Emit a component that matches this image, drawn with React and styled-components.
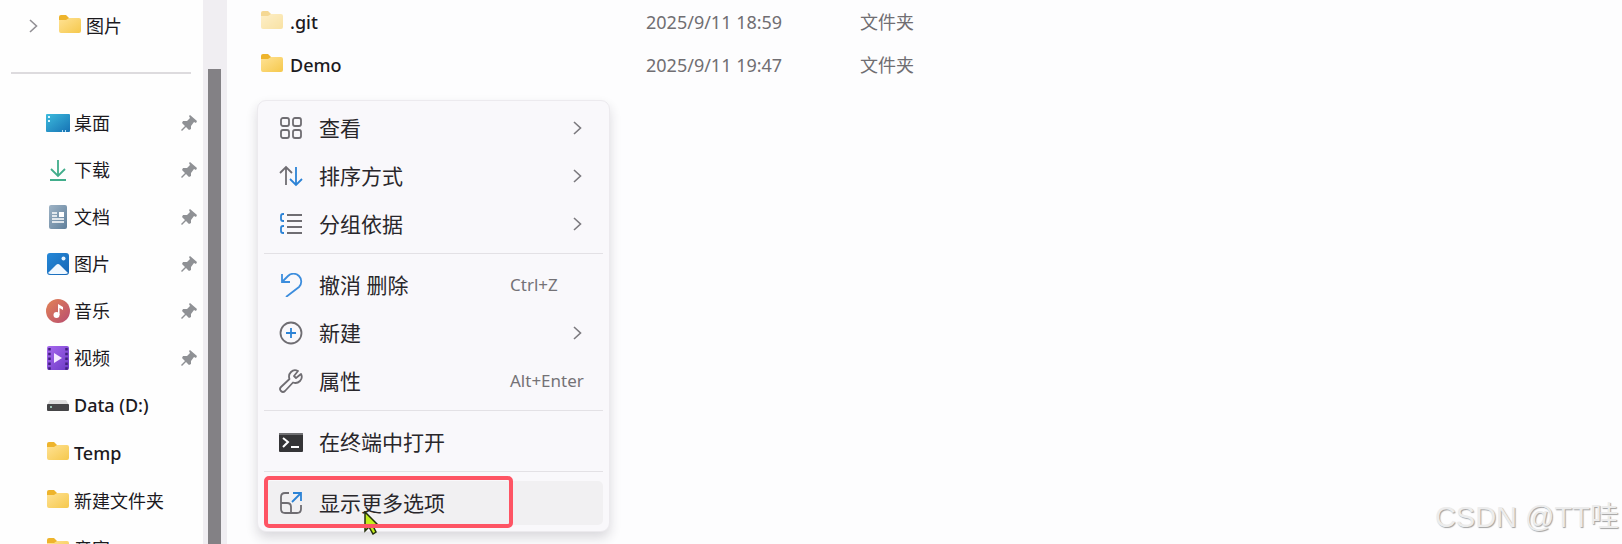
import React from "react";
import styled, { createGlobalStyle } from "styled-components";

const GlobalStyle = createGlobalStyle`
  * {
    box-sizing: border-box;
  }
  body {
    margin: 0;
    overflow: hidden;
    color: #1c1a1e;
    background-color: #fefefe;
    font-family: "Noto Sans", "Noto Sans CJK SC", sans-serif;
    font-size: 18px;
    line-height: 24px;
  }
`;

const Window = styled.div`
  display: flex;
  height: 100vh;
  overflow: hidden;
`;

const Sidebar = styled.nav`
  flex: 0 0 203px;
  overflow: hidden;
`;

const TreeItem = styled.a`
  display: flex;
  align-items: center;
  height: 52px;
  padding-left: 29px;
  color: inherit;
  text-decoration: none;

  svg + svg {
    margin: 0 4px 0 20px;
  }
`;

const Divider = styled.hr`
  height: 2px;
  margin: 20px 12px 25px 11px;
  border: 0;
  background-color: #dddbde;
`;

const PlaceList = styled.ul`
  margin: 0;
  padding: 0;
  list-style: none;
`;

const Place = styled.a`
  display: flex;
  align-items: center;
  gap: 4px;
  height: ${props => (props.$pinned ? "47px" : "48px")};
  padding: 0 6px 0 46px;
  color: inherit;
  text-decoration: none;
  white-space: nowrap;
`;

const PlaceName = styled.span`
  flex: 1;
  font-weight: ${props => (props.$latin ? 500 : 400)};
`;

const Scrollbar = styled.div`
  flex: 0 0 24px;
  padding: 69px 6px 0 5px;
  background-color: #f0eef2;
`;

const Thumb = styled.div`
  height: 100%;
  background-color: #838185;
`;

const Main = styled.main`
  position: relative;
  flex: 1;
  min-width: 0;
  background-color: #fdfdfe;
`;

const FileTable = styled.table`
  width: 100%;
  table-layout: fixed;
  border-collapse: collapse;
`;

const FileCell = styled.td`
  width: ${props => props.$width || "auto"};
  height: 43px;
  padding: 0;
  color: #706e72;
`;

const FileName = styled.a`
  display: flex;
  align-items: center;
  gap: 6px;
  padding-left: 33px;
  color: #1c1a1e;
  font-weight: 500;
  text-decoration: none;
`;

const Menu = styled.div`
  position: absolute;
  top: 100px;
  left: 30px;
  display: flex;
  flex-direction: column;
  width: 353px;
  padding: 3px 6px 4px;
  border: 1px solid #eceaee;
  border-radius: 9px;
  background-color: #f9f8fb;
  box-shadow: 0 6px 12px rgba(40, 30, 50, 0.16);
`;

const MenuItem = styled.button`
  display: flex;
  align-items: center;
  gap: 16px;
  width: 100%;
  height: 44px;
  margin: 2px 0;
  padding: 0 16px 0 15px;
  border: 0;
  border-radius: 5px;
  background-color: ${props => (props.$active ? "#f1f0f2" : "transparent")};
  color: #29272b;
  font-family: inherit;
  font-size: 21px;
  line-height: 28px;
  text-align: left;
`;

const MenuLabel = styled.span`
  flex: 1;
`;

const Shortcut = styled.span`
  width: 77px;
  color: #747276;
  font-size: 17px;
`;

const Arrow = styled.span`
  display: flex;
  margin-right: 5px;
`;

const Separator = styled.hr`
  width: 100%;
  height: 1px;
  margin: 5px 0 7px;
  border: 0;
  background-color: #e3e1e5;
`;

const Marked = styled.div`
  position: relative;
`;

const Frame = styled.div`
  position: absolute;
  top: -3px;
  left: 0;
  width: 249px;
  height: 52px;
  border: 4px solid #fe5464;
  border-radius: 5px;
`;

const Pointer = styled.svg`
  position: absolute;
  top: 32px;
  left: 100px;
`;

const Watermark = styled.div`
  position: absolute;
  right: 3px;
  bottom: 9px;
  color: #ececec;
  font-family: "Liberation Sans", "Noto Sans CJK SC", sans-serif;
  font-size: 29px;
  line-height: 36px;
  text-shadow: 1px 1px 1px #a2a2a2;
`;

const Folder = ({ pale }) => (
  <svg width="24" height="24" viewBox="0 0 24 24" opacity={pale ? 0.5 : 1}>
    <defs>
      <linearGradient id="folder" x1="0" y1="0" x2="1" y2="1">
        <stop offset="0" stopColor="#ffe294" />
        <stop offset="1" stopColor="#f5c84c" />
      </linearGradient>
    </defs>
    <path d="M1 3q0-2 2-2h5l3 3v5H1z" fill="#eeb42c" />
    <path d="M1 6h7l3-2h10q2 0 2 2v11q0 2-2 2H3q-2 0-2-2z" fill="url(#folder)" />
  </svg>
);

const Desktop = () => (
  <svg width="24" height="24" viewBox="0 0 24 24">
    <defs>
      <linearGradient id="desktop" x1="0" y1="0" x2="1" y2="1">
        <stop offset="0" stopColor="#3dbbdd" />
        <stop offset="1" stopColor="#1672b4" />
      </linearGradient>
    </defs>
    <rect y="3" width="24" height="18" rx="1" fill="url(#desktop)" />
    <path d="M2 5h2v2H2zM2 9h2v2H2z" fill="#d8f6ff" />
    <path d="M16 19h1v2h-1zM19 19h1v2h-1z" fill="#b4ddf4" />
  </svg>
);

const Download = () => (
  <svg width="24" height="24" viewBox="0 0 24 24" fill="none" stroke="#41ad8b" strokeWidth="1.8">
    <path d="M12 2v16M5 11l7 7 7-7M4 22h16" />
  </svg>
);

const Documents = () => (
  <svg width="24" height="24" viewBox="0 0 24 24">
    <defs>
      <linearGradient id="documents" x1="0" y1="0" x2="1" y2="1">
        <stop offset="0" stopColor="#9eb3c5" />
        <stop offset="1" stopColor="#5f7f9b" />
      </linearGradient>
    </defs>
    <rect x="3" width="18" height="24" rx="2" fill="url(#documents)" />
    <path d="M6 8h5M6 11h5M6 14h12M6 17h12" stroke="#fff" strokeWidth="1.5" />
    <path d="M13 7h5v5h-5z" fill="#fff" />
  </svg>
);

const Pictures = () => (
  <svg width="24" height="24" viewBox="0 0 24 24">
    <defs>
      <linearGradient id="pictures" x1="0" y1="0" x2="1" y2="1">
        <stop offset="0" stopColor="#2588d8" />
        <stop offset="1" stopColor="#1766b4" />
      </linearGradient>
    </defs>
    <rect x="1" y="1" width="22" height="22" rx="3" fill="url(#pictures)" />
    <path d="M2 21l8-8q2-2 4 0l8 8q-1 1-3 1H5q-2 0-3-1z" fill="#f0f8ff" />
    <circle cx="17.5" cy="6.5" r="2" fill="#e4f3ff" />
  </svg>
);

const Music = () => (
  <svg width="24" height="24" viewBox="0 0 24 24">
    <defs>
      <linearGradient id="music" x1="0" y1="0" x2="1" y2="1">
        <stop offset="0" stopColor="#e38456" />
        <stop offset="1" stopColor="#b84c70" />
      </linearGradient>
    </defs>
    <circle cx="12" cy="12" r="12" fill="url(#music)" />
    <circle cx="10.5" cy="16" r="3" fill="#fff" />
    <path d="M12 16V5l5 3v3l-3.5-2v7z" fill="#fff" />
  </svg>
);

const Videos = () => (
  <svg width="24" height="24" viewBox="0 0 24 24">
    <defs>
      <linearGradient id="videos" x1="0" y1="0" x2="1" y2="1">
        <stop offset="0" stopColor="#a768ee" />
        <stop offset="1" stopColor="#6c3ac6" />
      </linearGradient>
    </defs>
    <rect x="1" width="22" height="24" rx="2" fill="url(#videos)" />
    <path d="M3.5 2v22M20.5 2v22" stroke="#40207e" strokeWidth="2.5" strokeDasharray="2.5 2.3" />
    <path d="M8 7l8 5-8 5z" fill="#f4e8ff" />
  </svg>
);

const Drive = () => (
  <svg width="24" height="24" viewBox="0 0 24 24">
    <path d="M4 7h16l3 5H1z" fill="#dedede" />
    <rect x="1" y="11" width="22" height="7" rx="1" fill="#454547" />
    <path d="M4 14h2" stroke="#b0e4d0" strokeWidth="1.5" />
  </svg>
);

const Pin = () => (
  <svg width="16" height="18" viewBox="0 0 16 18">
    <path d="M9 1l7 6-1 2-2-1-3 4v3l-2 1-3-3-4 4-1-1 4-4-3-3 1-2h4l3-3-1-2z" fill="#8f9195" />
  </svg>
);

const Chevron = ({ color = "#7b797e" }) => (
  <svg width="9" height="16" viewBox="0 0 9 16" fill="none" stroke={color} strokeWidth="1.6">
    <path d="M1 2l6.5 6L1 14" />
  </svg>
);

const MenuIcon = ({ children }) => (
  <svg width="24" height="24" viewBox="0 0 24 24" fill="none" stroke="#6f6d72" strokeWidth="1.8">
    {children}
  </svg>
);

const ViewIcon = () => (
  <MenuIcon>
    <rect x="2" y="2" width="8" height="8" rx="2" />
    <rect x="14" y="2" width="8" height="8" rx="2" />
    <rect x="2" y="14" width="8" height="8" rx="2" />
    <rect x="14" y="14" width="8" height="8" rx="2" />
  </MenuIcon>
);

const SortIcon = () => (
  <MenuIcon>
    <path d="M7 21V3M1 9l6-6 6 6" />
    <path d="M17 3v18M11 15l6 6 6-6" stroke="#2c83d6" />
  </MenuIcon>
);

const GroupIcon = () => (
  <MenuIcon>
    <path d="M8 3h15M8 9h15M8 15h15M8 21h15" />
    <path d="M5 2H4Q2 2 2 4v3q0 2 2 2h1M5 14H4q-2 0-2 2v3q0 2 2 2h1" stroke="#2c83d6" />
  </MenuIcon>
);

const UndoIcon = () => (
  <MenuIcon>
    <path d="M3 1v8h8M3 9l6-6a7.5 7.5 0 0 1 11 11L7 24" stroke="#3c8ddd" />
  </MenuIcon>
);

const NewIcon = () => (
  <MenuIcon>
    <circle cx="12" cy="12" r="10.5" />
    <path d="M12 7v10M7 12h10" stroke="#2c83d6" />
  </MenuIcon>
);

const WrenchIcon = () => (
  <MenuIcon>
    <path
      d="M19 2q-4-2-7 1-3 3-1.5 7L2 18q-2 2 0 4 2 2 4 0l8-8.5q4 1.5 7-1.5 3-3 1-7l-5 4-2-2z"
      strokeLinejoin="round"
    />
  </MenuIcon>
);

const TerminalIcon = () => (
  <MenuIcon>
    <rect y="3" width="24" height="19" rx="1" fill="#353537" stroke="none" />
    <path d="M0 4h24" stroke="#77777a" />
    <path d="M4 8l5 4-5 5M12 17h8" stroke="#fff" strokeWidth="2" />
  </MenuIcon>
);

const MoreIcon = () => (
  <MenuIcon>
    <path d="M10 2H6Q2 2 2 6v12q0 4 4 4h12q4 0 4-4v-4M2 12h6q4 0 4 4v6" />
    <path d="M13 11l9-9M14 2h8v8" stroke="#2c83d6" />
  </MenuIcon>
);

const places = [
  { name: "桌面", icon: <Desktop />, pinned: true },
  { name: "下载", icon: <Download />, pinned: true },
  { name: "文档", icon: <Documents />, pinned: true },
  { name: "图片", icon: <Pictures />, pinned: true },
  { name: "音乐", icon: <Music />, pinned: true },
  { name: "视频", icon: <Videos />, pinned: true },
  { name: "Data (D:)", icon: <Drive />, latin: true },
  { name: "Temp", icon: <Folder />, latin: true },
  { name: "新建文件夹", icon: <Folder /> },
  { name: "音容", icon: <Folder /> }
];

const files = [
  { name: ".git", date: "2025/9/11 18:59", type: "文件夹", hidden: true },
  { name: "Demo", date: "2025/9/11 19:47", type: "文件夹" }
];

const Entry = ({ icon, label, shortcut, submenu, active }) => (
  <MenuItem type="button" role="menuitem" $active={active}>
    {icon}
    <MenuLabel>{label}</MenuLabel>
    {shortcut && <Shortcut>{shortcut}</Shortcut>}
    {submenu && <Arrow><Chevron /></Arrow>}
  </MenuItem>
);

const App = () => (
  <Window>
    <GlobalStyle />
    <Sidebar>
      <TreeItem href="#pictures">
        <Chevron color="#929095" />
        <Folder />
        图片
      </TreeItem>
      <Divider />
      <PlaceList>
        {places.map(place => (
          <li key={place.name}>
            <Place href="#place" $pinned={place.pinned}>
              {place.icon}
              <PlaceName $latin={place.latin}>{place.name}</PlaceName>
              {place.pinned && <Pin />}
            </Place>
          </li>
        ))}
      </PlaceList>
    </Sidebar>
    <Scrollbar>
      <Thumb />
    </Scrollbar>
    <Main>
      <FileTable>
        <tbody>
          {files.map(file => (
            <tr key={file.name}>
              <FileCell $width="419px">
                <FileName href="#file">
                  <Folder pale={file.hidden} />
                  {file.name}
                </FileName>
              </FileCell>
              <FileCell $width="214px">{file.date}</FileCell>
              <FileCell>{file.type}</FileCell>
            </tr>
          ))}
        </tbody>
      </FileTable>
      <Menu role="menu">
        <Entry icon={<ViewIcon />} label="查看" submenu />
        <Entry icon={<SortIcon />} label="排序方式" submenu />
        <Entry icon={<GroupIcon />} label="分组依据" submenu />
        <Separator />
        <Entry icon={<UndoIcon />} label="撤消 删除" shortcut="Ctrl+Z" />
        <Entry icon={<NewIcon />} label="新建" submenu />
        <Entry icon={<WrenchIcon />} label="属性" shortcut="Alt+Enter" />
        <Separator />
        <Entry icon={<TerminalIcon />} label="在终端中打开" />
        <Separator />
        <Marked>
          <Entry icon={<MoreIcon />} label="显示更多选项" active />
          <Pointer width="16" height="24" viewBox="0 0 16 24">
            <path d="M1 1v19l4-4 4 7 3-2-3-6h6z" fill="#c3ee1c" stroke="#26300c" strokeWidth="1.5" />
          </Pointer>
          <Frame />
        </Marked>
      </Menu>
      <Watermark>CSDN @TT哇</Watermark>
    </Main>
  </Window>
);

export default App;
